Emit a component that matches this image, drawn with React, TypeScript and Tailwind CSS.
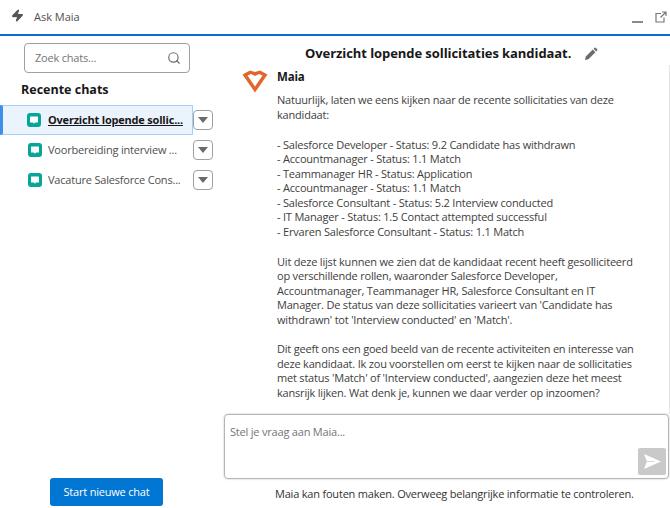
import { Search, Zap } from "lucide-react";

const chats = [
  { title: "Overzicht lopende sollic...", active: true },
  { title: "Voorbereiding interview ...", active: false },
  { title: "Vacature Salesforce Cons...", active: false },
];

const statuses = [
  "- Salesforce Developer - Status: 9.2 Candidate has withdrawn",
  "- Accountmanager - Status: 1.1 Match",
  "- Teammanager HR - Status: Application",
  "- Accountmanager - Status: 1.1 Match",
  "- Salesforce Consultant - Status: 5.2 Interview conducted",
  "- IT Manager - Status: 1.5 Contact attempted successful",
  "- Ervaren Salesforce Consultant - Status: 1.1 Match",
];

const ChatIcon = () => (
  <div className="flex h-[14px] w-[14px] shrink-0 items-center justify-center rounded-[3px] bg-[#06a59a]">
    <svg viewBox="0 0 10 10" className="h-[10px] w-[10px]">
      <path d="M1.5 1.5h7a.5.5 0 0 1 .5.5v5a.5.5 0 0 1-.5.5H6L5 8.8 4 7.5H1.5A.5.5 0 0 1 1 7V2a.5.5 0 0 1 .5-.5z" fill="#fff" />
    </svg>
  </div>
);

const App = () => {
  return (
    <div className="flex h-[508px] w-[670px] flex-col overflow-hidden bg-white font-['Open_Sans',sans-serif] text-[11px] tracking-[-0.2px] text-[#3e3e3c]">
      {/* Header */}
      <div className="flex h-[36px] shrink-0 items-center border-b-2 border-[#0b6fc9] pl-[11px] pr-[3px] tracking-normal">
        <Zap size={13} className="mb-[4px] fill-[#555] text-[#555]" />
        <span className="ml-[10px] text-[11px] text-[#514f4d]">Ask Maia</span>
        <div className="ml-auto flex items-center gap-[12px]">
          <div className="mt-[9px] h-[2px] w-[11px] bg-[#8a8a8a]" />
          <svg viewBox="0 0 12 12" className="h-[12px] w-[12px]" fill="none" stroke="#777" strokeWidth="1.2">
            <path d="M6 2.5H1v8.5h8V6.5M7 1h4v4M11 1 5.5 6.5" />
          </svg>
        </div>
      </div>

      <div className="flex min-h-0 flex-1">
        {/* Sidebar */}
        <div className="flex w-[224px] shrink-0 flex-col">
          <div className="ml-[24px] mt-[7px] flex h-[30px] w-[166px] items-center justify-between rounded-[4px] border border-[#a0a0a0] pl-[10px] pr-[8px]">
            <span className="text-[#74747a]">Zoek chats...</span>
            <Search size={14} className="text-[#6b6b6b]" />
          </div>
          <h2 className="ml-[21px] mt-[7px] text-[12.5px] font-bold leading-[20px] tracking-normal text-[#181818]">Recente chats</h2>
          <div className="mt-[5px] flex flex-col">
            {chats.map((chat) => (
              <div key={chat.title} className="flex h-[30px] items-center">
                <div
                  className={
                    chat.active
                      ? "flex h-[30px] w-[193px] items-center gap-[7px] border border-[#a5cff5] border-l-[3px] border-l-[#3d8fe8] bg-[#ebf3fd] pl-[24px]"
                      : "flex h-[30px] w-[193px] items-center gap-[6px] pl-[28px]"
                  }
                >
                  <ChatIcon />
                  <span className={chat.active ? "whitespace-nowrap font-bold text-[#181818] underline" : "whitespace-nowrap text-[#514f4d]"}>
                    {chat.title}
                  </span>
                </div>
                <div className="flex h-[20px] w-[20px] items-center justify-center rounded-[4px] border border-[#a0a0a0]">
                  <div className="h-0 w-0 border-x-[5px] border-t-[6px] border-x-transparent border-t-[#6b6b6b]" />
                </div>
              </div>
            ))}
          </div>
          <button className="ml-[50px] mt-auto mb-[2px] h-[28px] w-[113px] rounded-[3px] bg-[#0176d3] text-center text-white">
            Start nieuwe chat
          </button>
        </div>

        {/* Chat */}
        <div className="flex min-w-0 flex-1 flex-col">
          <div className="mt-[7px] flex h-[22px] items-center pl-[81px]">
            <h1 className="whitespace-nowrap text-[13px] font-bold tracking-[-0.07px] text-[#181818]">Overzicht lopende sollicitaties kandidaat.</h1>
            <svg viewBox="0 0 14 14" className="ml-[13px] h-[14px] w-[14px]" fill="#6b6b6b">
              <path d="M1 13l.8-3.4 7-7 2.6 2.6-7 7zM9.6 1.8l1-1a.8.8 0 0 1 1.1 0l1.5 1.5a.8.8 0 0 1 0 1.1l-1 1z" />
            </svg>
          </div>
          <div className="flex h-[349px] gap-[9px] border-r border-[#e5e5e5] pl-[18px]">
            <svg viewBox="0 0 26 24" className="mt-[4px] h-[24px] w-[26px] shrink-0" fill="#e2662c" fillRule="evenodd">
              <path d="M0.5 5.5 8 1.5 13 3l5-1.5 7.5 4L13 23.5zM5.5 6.5 9 5l4 2 4-2 3.5 1.5L13 17.5z" />
            </svg>
            <div className="w-[362px] leading-[14.5px]">
              <div className="mt-[4px] text-[11.5px] font-bold leading-[16px] text-[#181818]">Maia</div>
              <p className="mt-[8px]">Natuurlijk, laten we eens kijken naar de recente sollicitaties van deze kandidaat:</p>
              <div className="mt-[15.5px]">
                {statuses.map((line, i) => (
                  <div key={i}>{line}</div>
                ))}
              </div>
              <p className="mt-[15.5px]">
                Uit deze lijst kunnen we zien dat de kandidaat recent heeft gesolliciteerd op verschillende rollen, waaronder Salesforce Developer, Accountmanager, Teammanager HR, Salesforce Consultant en IT Manager. De status van deze sollicitaties varieert van 'Candidate has withdrawn' tot 'Interview conducted' en 'Match'.
              </p>
              <p className="mt-[15px]">
                Dit geeft ons een goed beeld van de recente activiteiten en interesse van deze kandidaat. Ik zou voorstellen om eerst te kijken naar de sollicitaties met status 'Match' of 'Interview conducted', aangezien deze het meest kansrijk lijken. Wat denk je, kunnen we daar verder op inzoomen?
              </p>
            </div>
          </div>
          <div className="relative mr-[1px] h-[65px] rounded-[4px] border border-[#b5b5b5] pl-[5px] pt-[9px] shadow-[0_0_2px_#bbb]">
            <span className="text-[#74747a]">Stel je vraag aan Maia...</span>
            <div className="absolute bottom-[3px] right-[2px] flex h-[27px] w-[28px] items-center justify-center rounded-[2px] bg-[#c9c9c9]">
              <svg viewBox="0 0 18 16" className="h-[15px] w-[19px]" fill="#fff">
                <path d="M0 0l18 8-18 8 3-8z" />
                <path d="M3 8h8" stroke="#c9c9c9" strokeWidth="0.8" />
              </svg>
            </div>
          </div>
          <div className="mt-[7px] pl-[51px] text-[#333]">Maia kan fouten maken. Overweeg belangrijke informatie te controleren.</div>
        </div>
      </div>
    </div>
  );
};

export default App;
